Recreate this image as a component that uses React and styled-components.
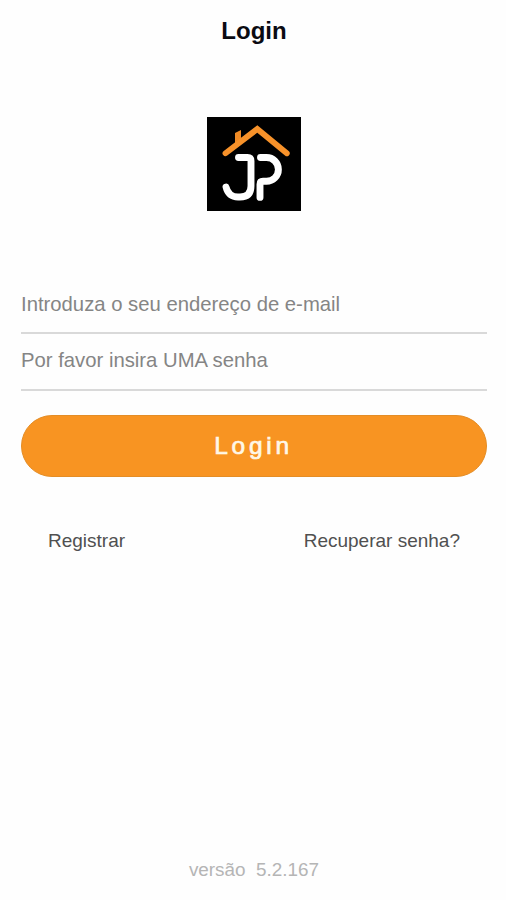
import React from "react";
import styled, { createGlobalStyle } from "styled-components";

const GlobalStyle = createGlobalStyle`
  * { box-sizing: border-box; }
  body { margin: 0; background: #fefefe; font-family: "Liberation Sans", Arial, sans-serif; }
`;

const Screen = styled.main`
  display: flex;
  flex-direction: column;
  height: 900px;
  padding: 0 19px 0 21px;
`;

const Title = styled.h1`
  margin: 17px 0 0;
  height: 28px;
  font-size: 24px;
  line-height: 28px;
  text-align: center;
  color: #0b0b12;
`;

const Logo = styled.svg`
  display: block;
  width: 94px;
  height: 94px;
  margin: 72px auto 0;
`;

const Form = styled.form`
  display: flex;
  flex-direction: column;
  margin-top: 67px;
`;

const Field = styled.input`
  width: 100%;
  height: ${(p) => p.$height}px;
  padding: 0 0 ${(p) => p.$lift || 0}px;
  border: 0;
  border-bottom: 2px solid #d9d9d9;
  border-radius: 0;
  outline: 0;
  background: transparent;
  font-family: inherit;
  font-size: 20.3px;
  color: #333;
  &::placeholder { color: #858585; opacity: 1; }
`;

const SubmitButton = styled.button`
  height: 62px;
  margin-top: 24px;
  padding: 0 1px 0 0;
  border: 1px solid #e48d26;
  border-radius: 31px;
  background: #f89422;
  color: #fff8e8;
  font-family: inherit;
  font-size: 24.5px;
  letter-spacing: 3.7px;
  -webkit-text-stroke: 0.7px #fff8e8;
`;

const Links = styled.nav`
  display: flex;
  justify-content: space-between;
  margin: 52px 27px 0;
`;

const TextLink = styled.a`
  font-size: 19px;
  line-height: 24px;
  color: #505050;
  text-decoration: none;
`;

const Version = styled.footer`
  margin: auto 0 18px;
  text-align: center;
  font-size: 18.9px;
  line-height: 24px;
  white-space: pre;
  color: #b5b5b5;
`;

function HouseLogo() {
  return (
    <Logo viewBox="0 0 94 94" role="img" aria-label="JP">
      <rect width="94" height="94" fill="#000" />
      <path d="M28 24v-8l6-3v10l-6 4z" fill="#ef8a25" />
      <path d="M18.5 36.3 50.3 12 79.8 36.3" fill="none" stroke="#f7922a" strokeWidth="5.8" strokeLinecap="round" strokeLinejoin="miter" />
      <path d="M31.5 40.5h9q3.5 0 3.5 3.5v25q0 11-11 11h-2q-9.5 0-12-10" fill="none" stroke="#fff" strokeWidth="6.9" strokeLinecap="round" />
      <path d="M53.5 40.5h6a11.9 11.9 0 0 1 0 23.8h-3.5q-3 0-3 3v13.1" fill="none" stroke="#fff" strokeWidth="6.9" strokeLinecap="round" />
    </Logo>
  );
}

export default function App() {
  return (
    <>
      <GlobalStyle />
      <Screen>
        <Title>Login</Title>
        <HouseLogo />
        <Form onSubmit={(e) => e.preventDefault()}>
          <Field $height={56} $lift={2} type="email" placeholder="Introduza o seu endereço de e-mail" />
          <Field $height={57} $lift={3} type="password" placeholder="Por favor insira UMA senha" />
          <SubmitButton type="submit">Login</SubmitButton>
        </Form>
        <Links>
          <TextLink href="#">Registrar</TextLink>
          <TextLink href="#">Recuperar senha?</TextLink>
        </Links>
        <Version>{"versão  5.2.167"}</Version>
      </Screen>
    </>
  );
}
